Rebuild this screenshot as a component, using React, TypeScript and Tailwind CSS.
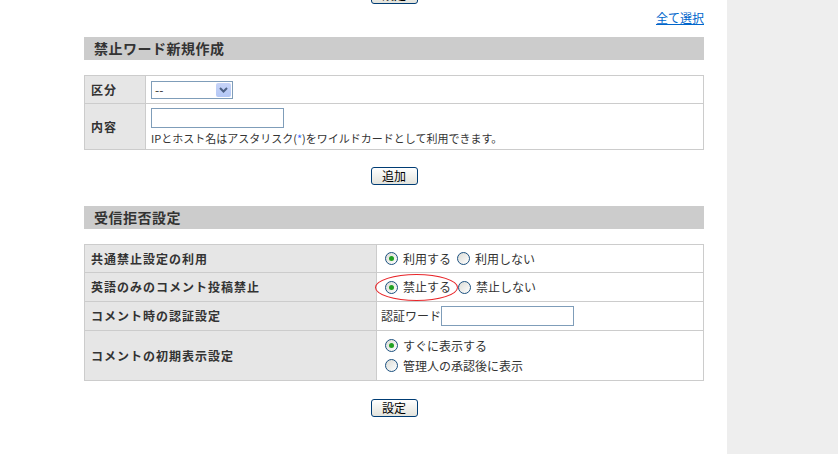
import React from 'react';

const font = { fontFamily: '"Noto Sans CJK JP", "Noto Sans", sans-serif' };

const Radio = ({ checked }: { checked?: boolean }) => (
  <span className="relative inline-block w-[13px] h-[13px] rounded-full border border-[#1c5180] bg-gradient-to-br from-[#dcdcd6] to-white shrink-0">
    {checked && (
      <span className="absolute left-[3px] top-[3px] w-[5px] h-[5px] rounded-full bg-[#21a121]" />
    )}
  </span>
);

const XpButton = ({ label, className = '' }: { label: string; className?: string }) => (
  <button
    className={`w-[47px] h-[18px] rounded-[3px] border border-[#003c74] bg-gradient-to-b from-white to-[#e3e3dc] text-[12px] leading-[14px] text-black ${className}`}
  >
    {label}
  </button>
);

const SectionHeader = ({ title }: { title: string }) => (
  <div className="h-[23px] bg-[#cccccc] pl-[10px] flex items-center text-[14px] tracking-[0.5px] font-bold text-[#333]">
    {title}
  </div>
);

const labelCls =
  'border border-[#cccccc] bg-[#e6e6e6] text-left pl-[6px] font-bold text-[12px] tracking-[1px] leading-[16px]';
const cellCls = 'border border-[#cccccc] leading-[16px]';

export default function App() {
  return (
    <div className="flex w-[838px] h-[454px] overflow-hidden bg-white text-[#333]" style={font}>
      <div className="w-[727px] pl-[84px]">
        <div className="w-[620px]">
          <div className="h-[4px] overflow-visible flex justify-center">
            <XpButton label="設定" className="-mt-[14px] shrink-0" />
          </div>
          <div className="mt-[5px] h-[18px] flex justify-end">
            <a href="#" className="text-[12px] leading-[18px] text-[#0066cc] underline">
              全て選択
            </a>
          </div>
          <div className="mt-[10px]">
            <SectionHeader title="禁止ワード新規作成" />
          </div>

          <table className="mt-[15px] w-full border-collapse text-[12px]">
            <tbody>
              <tr className="h-[28px]">
                <th className={`w-[61px] ${labelCls}`}>区分</th>
                <td className={`${cellCls} pl-[5px]`}>
                  <div className="w-[82px] h-[18px] border border-[#7f9db9] bg-white flex items-center justify-between pl-[3px] pr-[1px]">
                    <span className="leading-none">--</span>
                    <span className="w-[15px] h-[14px] rounded-[2px] bg-gradient-to-b from-[#c6d3f7] to-[#b4c8f6] flex items-center justify-center">
                      <svg width="9" height="6" viewBox="0 0 9 6">
                        <path d="M1 1 L4.5 4.5 L8 1" stroke="#4d6185" strokeWidth="2" fill="none" />
                      </svg>
                    </span>
                  </div>
                </td>
              </tr>
              <tr className="h-[46px]">
                <th className={labelCls}>内容</th>
                <td className={`${cellCls} pl-[5px] pt-[4px] pb-[2px] align-top`}>
                  <div className="w-[133px] h-[20px] border border-[#7f9db9] bg-white" />
                  <div className="mt-[2px] leading-[16px] text-[11px] text-[#333]">
                    IPとホスト名はアスタリスク(<span className="text-[#3366ff]">*</span>)をワイルドカードとして利用できます。
                  </div>
                </td>
              </tr>
            </tbody>
          </table>

          <div className="mt-[17px] flex justify-center">
            <XpButton label="追加" />
          </div>

          <div className="mt-[21px]">
            <SectionHeader title="受信拒否設定" />
          </div>

          <table className="mt-[15px] w-full border-collapse text-[12px]">
            <tbody>
              <tr className="h-[28px]">
                <th className={`w-[292px] ${labelCls}`}>共通禁止設定の利用</th>
                <td className={`${cellCls} pl-[8px]`}>
                  <div className="flex items-center">
                    <Radio checked />
                    <span className="ml-[5px]">利用する</span>
                    <span className="ml-[6px] flex"><Radio /></span>
                    <span className="ml-[5px]">利用しない</span>
                  </div>
                </td>
              </tr>
              <tr className="h-[29px]">
                <th className={labelCls}>英語のみのコメント投稿禁止</th>
                <td className={`${cellCls} pl-[8px]`}>
                  <div className="flex items-center">
                    <span className="relative flex items-center">
                      <Radio checked />
                      <span className="ml-[5px]">禁止する</span>
                      <span className="absolute -left-[10px] -top-[5px] w-[83px] h-[27px] rounded-[50%] border border-[#e8262a]" />
                    </span>
                    <span className="ml-[7px] flex"><Radio /></span>
                    <span className="ml-[5px]">禁止しない</span>
                  </div>
                </td>
              </tr>
              <tr className="h-[29px]">
                <th className={labelCls}>コメント時の認証設定</th>
                <td className={`${cellCls} pl-[4px]`}>
                  <div className="flex items-center">
                    <span>認証ワード</span>
                    <div className="w-[133px] h-[20px] border border-[#7f9db9] bg-white" />
                  </div>
                </td>
              </tr>
              <tr className="h-[50px]">
                <th className={labelCls}>コメントの初期表示設定</th>
                <td className={`${cellCls} pl-[8px]`}>
                  <div className="flex items-center h-[20px]">
                    <Radio checked />
                    <span className="ml-[5px]">すぐに表示する</span>
                  </div>
                  <div className="flex items-center h-[20px]">
                    <Radio />
                    <span className="ml-[5px]">管理人の承認後に表示</span>
                  </div>
                </td>
              </tr>
            </tbody>
          </table>

          <div className="mt-[18px] flex justify-center">
            <XpButton label="設定" />
          </div>
        </div>
      </div>
      <div className="w-[111px] h-full bg-[#eeeeee]" />
    </div>
  );
}
